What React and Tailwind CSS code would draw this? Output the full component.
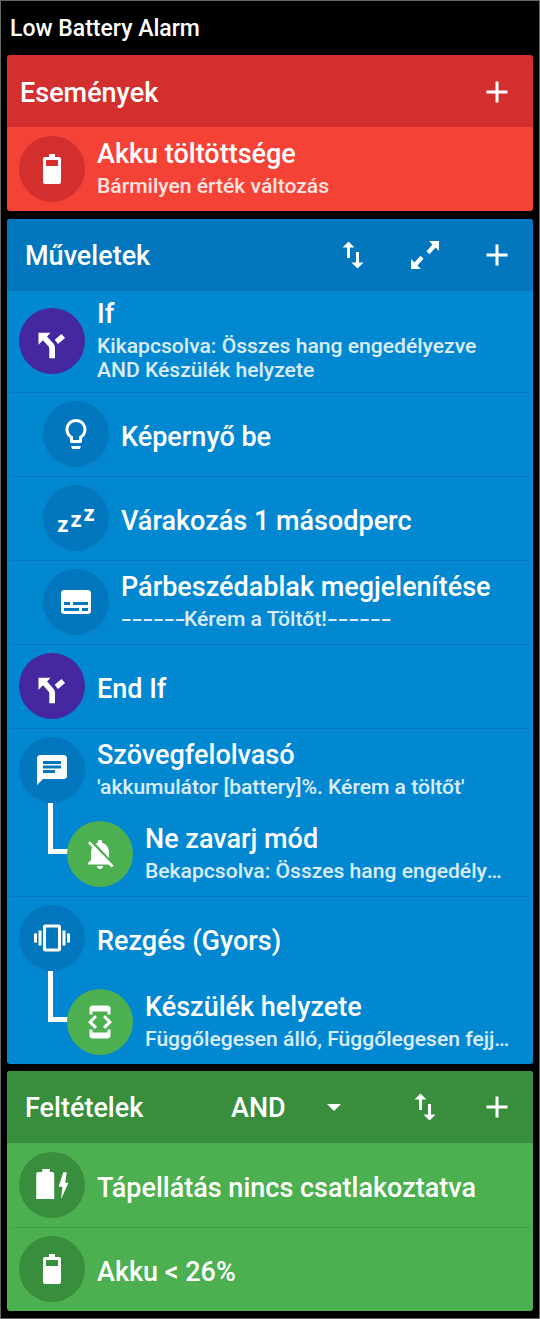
const ICONS = {
  plus: "M19 13h-6v6h-2v-6H5v-2h6V5h2v6h6v2z",
  swap: "M16 17.01V10h-2v7.01h-3L15 21l4-3.99h-3zM9 3L5 6.99h3V14h2V6.99h3L9 3z",
  expand: "M14.7 2.7h6.6v6.6L19 7l-4 4.500-2-2L17 5zM9.300 21.300H2.700v-6.600L5 17l4-4.500 2 2L7 19z",
  battery:
    "M16.67 4H14V2h-4v2H7.33C6.6 4 6 4.6 6 5.33v15.33C6 21.4 6.6 22 7.33 22h9.33c.74 0 1.34-.6 1.34-1.33V5.33C18 4.6 17.4 4 16.67 4zM16 6H8v4h8z",
  fork: "M3 6.5h8L8.7 9l3.6 4c1.100 1.200 1.700 2 1.700 3.500v7h-3.800v-6.500c0-.7-.3-1.200-.8-1.700L6 11.500l-3 3zM18.300 7.300l2.400 2.700-4.700 4-2.200-2.800z",
  bulb: "M9 21c0 .55.45 1 1 1h4c.55 0 1-.45 1-1v-1H9v1zm3-19C8.14 2 5 5.14 5 9c0 2.38 1.19 4.47 3 5.74V17c0 .55.45 1 1 1h6c.55 0 1-.45 1-1v-2.26c1.81-1.27 3-3.36 3-5.74 0-3.86-3.14-7-7-7zm2.85 11.1l-.85.6V16h-4v-2.3l-.85-.6C7.8 12.16 7 10.63 7 9c0-2.76 2.24-5 5-5s5 2.24 5 5c0 1.63-.8 3.16-2.15 4.1z",
  subtitles:
    "M20 4H4c-1.1 0-2 .9-2 2v12c0 1.1.9 2 2 2h16c1.1 0 2-.9 2-2V6c0-1.1-.9-2-2-2zM4 12h4v2H4v-2zm10 6H4v-2h10v2zm6 0h-4v-2h4v2zm0-4H10v-2h10v2z",
  message:
    "M20 2H4c-1.1 0-1.99.9-1.99 2L2 22l4-4h14c1.1 0 2-.9 2-2V4c0-1.1-.9-2-2-2zM6 9h12v2H6V9zm8 5H6v-2h8v2zm4-6H6V6h12v2z",
  bellOff:
    "M20 18.69L7.84 6.14 5.27 3.49 4 4.76l2.8 2.8v.01c-.52.99-.8 2.16-.8 3.42v5l-2 2v1h13.73l2 2L21 19.72l-1-1.03zM12 22c1.11 0 2-.89 2-2h-4c0 1.11.89 2 2 2zm6-7.32V11c0-3.08-1.64-5.64-4.5-6.32V4c0-.83-.67-1.5-1.5-1.5s-1.5.67-1.5 1.5v.68c-.15.03-.29.08-.42.12-.1.03-.2.07-.3.11h-.01c-.2.08-.4.17-.59.27-.01 0-.01 0-.02.01L18 14.68z",
  vibration:
    "M0 15h2V9H0v6zm3 2h2V7H3v10zm19-8v6h2V9h-2zm-3 8h2V7h-2v10zM16.5 3h-9C6.67 3 6 3.67 6 4.5v15c0 .83.67 1.5 1.5 1.5h9c.83 0 1.5-.67 1.5-1.5v-15c0-.83-.67-1.5-1.5-1.5zM16 19H8V5h8v14z",
  device:
    "M7 5h10v2h2V3c0-1.1-.9-1.99-2-1.99L7 1c-1.1 0-2 .9-2 2v4h2V5zm8.41 11.59L20 12l-4.59-4.59L14 8.83 17.17 12 14 15.17l1.41 1.42zM10 15.17L6.83 12 10 8.83 8.59 7.41 4 12l4.59 4.59L10 15.17zM17 19H7v-2H5v4c0 1.1.9 2 2 2h10c1.1 0 2-.9 2-2v-4h-2v2z",
  power:
    "M5.500 1.300h5v2h1.700c.8 0 1.300.6 1.300 1.300v16.700h-12V4.600c0-.7.5-1.300 1.300-1.300h2.700zM19.500 3.500h2.300l-1 7H23L18 21.500l1-8.300h-2.600z",
};

function Icon({ name, className = "" }) {
  return (
    <svg viewBox="0 0 24 24" width={36} height={36} fill="white" fillRule="evenodd" className={className}>
      <path d={ICONS[name]} />
    </svg>
  );
}

function Header({ title, bg, children, pl = "pl-[18px]", titleClass = "" }) {
  return (
    <div className={`flex h-[72px] items-center ${bg} ${pl} pr-[18px] text-white`}>
      <span className={`pt-[3px] text-[27px] font-medium ${titleClass}`}>{title}</span>
      {children}
    </div>
  );
}

function Sleep() {
  return (
    <div className="flex h-9 items-end gap-[2px] text-[22px] font-bold leading-none text-white">
      <span className="mb-0">z</span>
      <span className="mb-[5px]">z</span>
      <span className="mb-[11px]">z</span>
    </div>
  );
}

function Texts({ title, sub, pr = "pr-3" }) {
  return (
    <div className={`ml-3 min-w-0 flex-1 text-white ${sub ? "pb-[1px]" : "pt-[5px]"} ${pr}`}>
      <div className="text-[27px] font-medium leading-[30px]">{title}</div>
      {sub && <div className="mt-[5px] truncate text-[21.1px] font-[460] leading-6 text-white/85">{sub}</div>}
    </div>
  );
}

function Row({ icon, circle, title, sub, indent = false, divider = "", inner = "h-[82px]" }) {
  return (
    <div className={`relative h-[84px] ${divider}`}>
      <div className={`flex items-center ${inner} ${indent ? "pl-9" : "pl-3"}`}>
        <div className={`flex h-[66px] w-[66px] shrink-0 items-center justify-center rounded-full ${circle}`}>
          {icon === "sleep" ? <Sleep /> : <Icon name={icon} />}
        </div>
        <Texts title={title} sub={sub} />
      </div>
    </div>
  );
}

// child row, hooked to its parent with the white elbow line
function ChildRow({ icon, title, sub, pr }) {
  return (
    <div className="relative flex h-[82px] items-center pl-[60px]">
      <div className="absolute -top-[10px] left-[41px] h-[51px] w-[22px] border-b-[5px] border-l-[5px] border-white" />
      <div className="relative flex h-[66px] w-[66px] shrink-0 items-center justify-center rounded-full bg-[#4caf50]">
        <Icon name={icon} />
      </div>
      <Texts title={title} sub={sub} pr={pr} />
    </div>
  );
}

function Dashes() {
  return <span className="inline-block w-[63px] origin-left scale-x-[1.5]">------</span>;
}

export default function App() {
  const blueLine = "after:absolute after:inset-x-[3px] after:bottom-0 after:h-px after:bg-[#0277bd]";
  const greenLine = "after:absolute after:inset-x-[3px] after:-bottom-px after:h-px after:bg-[#43a047]";
  return (
    <div
      className="flex h-[1319px] flex-col border border-[#666] bg-black px-[6px]"
      style={{ fontFamily: "Roboto, sans-serif" }}
    >
      <div className="flex h-[54px] items-center pl-[3px] pt-[3px] text-[23px] font-medium text-white">Low Battery Alarm</div>

      <section className="overflow-hidden rounded-[3px]">
        <Header title="Események" bg="bg-[#d32f2f]" pl="pl-[13px] pt-[1px]">
          <Icon name="plus" className="ml-auto" />
        </Header>
        <div className="bg-[#f44336]">
          <Row icon="battery" circle="bg-[#d32f2f]" title="Akku töltöttsége" sub="Bármilyen érték változás" inner="h-[84px]" />
        </div>
      </section>

      <section className="mt-2 overflow-hidden rounded-[3px] bg-[#0288d1]">
        <Header title="Műveletek" bg="bg-[#0277bd]">
          <Icon name="swap" className="ml-auto" />
          <Icon name="expand" className="ml-9" />
          <Icon name="plus" className="ml-9" />
        </Header>
        <div className={`relative flex h-[102px] items-center pl-3 ${blueLine}`}>
          <div className="mb-[3px] flex h-[66px] w-[66px] shrink-0 items-center justify-center rounded-full bg-[#4527a0]">
            <Icon name="fork" />
          </div>
          <div className="ml-3 pb-[4px] text-white">
            <div className="text-[27px] font-medium leading-[30px]">If</div>
            <div className="mt-[5px] text-[21.1px] font-[460] leading-6 text-white/85">
              Kikapcsolva: Összes hang engedélyezve
              <br />
              AND Készülék helyzete
            </div>
          </div>
        </div>
        <Row icon="bulb" circle="bg-[#0277bd]" title="Képernyő be" indent divider={blueLine} />
        <Row icon="sleep" circle="bg-[#0277bd]" title="Várakozás 1 másodperc" indent divider={blueLine} />
        <Row
          icon="subtitles"
          circle="bg-[#0277bd]"
          title="Párbeszédablak megjelenítése"
          sub={
            <>
              <Dashes />Kérem a Töltőt!<Dashes />
            </>
          }
          indent
          divider={blueLine}
        />
        <Row icon="fork" circle="bg-[#4527a0]" title="End If" divider={blueLine} />
        <Row icon="message" circle="bg-[#0277bd]" title="Szövegfelolvasó" sub="'akkumulátor [battery]%. Kérem a töltőt'" />
        <div className={`relative h-[84px] ${blueLine}`}>
          <ChildRow icon="bellOff" title="Ne zavarj mód" sub="Bekapcsolva: Összes hang engedélyezve" pr="pr-[28px]" />
        </div>
        <Row icon="vibration" circle="bg-[#0277bd]" title="Rezgés (Gyors)" />
        <div className="h-[83px]">
          <ChildRow icon="device" title="Készülék helyzete" sub="Függőlegesen álló, Függőlegesen fejjel lefelé" pr="pr-[20px]" />
        </div>
      </section>

      <section className="mt-[7px] overflow-hidden rounded-[3px] bg-[#4caf50]">
        <Header title="Feltételek" bg="bg-[#388e3c]" titleClass="w-[206px]">
          <span className="pt-[3px] text-[27px] font-medium">AND</span>
          <span className="ml-[41px] h-0 w-0 border-x-[7px] border-t-[7px] border-x-transparent border-t-white" />
          <Icon name="swap" className="ml-auto" />
          <Icon name="plus" className="ml-9" />
        </Header>
        <Row icon="power" circle="bg-[#388e3c]" title="Tápellátás nincs csatlakoztatva" divider={greenLine} inner="h-[84px]" />
        <Row icon="battery" circle="bg-[#388e3c]" title="Akku < 26%" inner="h-[84px]" />
      </section>
    </div>
  );
}
